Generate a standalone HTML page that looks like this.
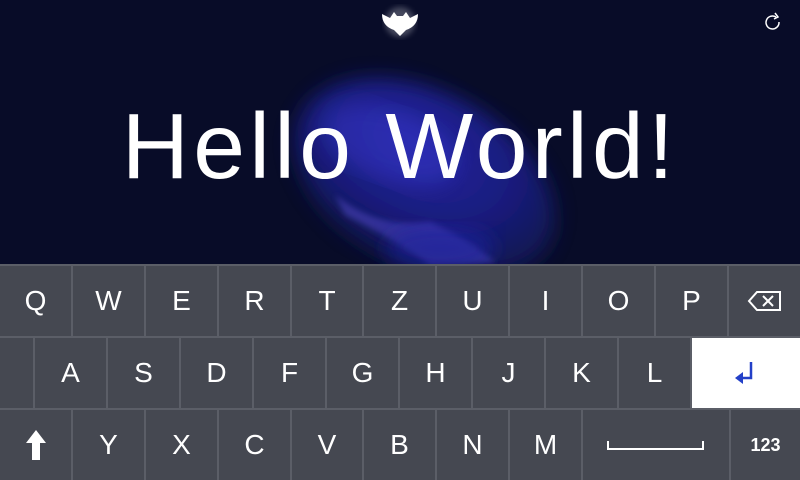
<!DOCTYPE html>
<html><head><meta charset="utf-8"><style>
html,body{margin:0;padding:0;width:800px;height:480px;overflow:hidden;background:#080c28;font-family:"Liberation Sans",sans-serif}
#bg{position:absolute;left:0;top:0}
h1{position:absolute;left:0;width:800px;top:96px;margin:0;text-align:center;color:#fff;font-weight:normal;font-size:93px;letter-spacing:4.3px;line-height:100px}
.kb{position:absolute;left:0;top:264px;width:800px;height:216px;background:#5b5e67}
.k{position:absolute;background:#454851;color:#fff;font-size:28px;display:flex;align-items:center;justify-content:center;height:70px}
</style></head><body>
<svg id="bg" width="800" height="480">
<defs>
<filter id="b"><feGaussianBlur stdDeviation="10"/></filter>
<filter id="b2"><feGaussianBlur stdDeviation="3"/></filter>
<radialGradient id="g" cx="0.4" cy="0.35" r="0.65"><stop offset="0" stop-color="#2a2ab8"/><stop offset="0.6" stop-color="#1c1f8c"/><stop offset="1" stop-color="#101850"/></radialGradient>
</defs>
<rect width="800" height="480" fill="#080c28"/>
<ellipse cx="425" cy="180" rx="140" ry="88" transform="rotate(28 425 180)" fill="url(#g)" filter="url(#b)" opacity="0.85"/>
<ellipse cx="390" cy="145" rx="70" ry="35" transform="rotate(20 390 145)" fill="#3a3ad0" filter="url(#b)" opacity="0.4"/>
<path d="M335 195 Q380 230 430 222 Q470 240 495 262 L430 265 Q400 242 345 215Z" fill="#5a4ed0" filter="url(#b2)" opacity="0.45"/>
<ellipse cx="440" cy="248" rx="55" ry="22" fill="#1f22a0" filter="url(#b)" opacity="0.6"/>
<circle cx="400" cy="22" r="15" fill="#fff" filter="url(#b2)" opacity="0.25"/>
<path d="M382 14 L390 18 L394 12 L397 16 L403 16 L406 12 L410 18 L418 14 Q418 26 406 30 L400 36 L394 30 Q382 26 382 14Z" fill="#fff"/>
<g fill="none" stroke="#fff" stroke-width="1.5"><path d="M779 22 A6.5 6.5 0 1 1 776 17"/><path d="M775 13 L778 17 L774 19"/></g>
</svg>
<h1>Hello World!</h1>
<div class="kb">
<div class="k" style="left:0;top:2px;width:71px">Q</div>
<div class="k" style="left:73px;top:2px;width:71px">W</div>
<div class="k" style="left:146px;top:2px;width:71px">E</div>
<div class="k" style="left:219px;top:2px;width:71px">R</div>
<div class="k" style="left:292px;top:2px;width:70px">T</div>
<div class="k" style="left:364px;top:2px;width:71px">Z</div>
<div class="k" style="left:437px;top:2px;width:71px">U</div>
<div class="k" style="left:510px;top:2px;width:71px">I</div>
<div class="k" style="left:583px;top:2px;width:71px">O</div>
<div class="k" style="left:656px;top:2px;width:71px">P</div>
<div class="k" style="left:729px;top:2px;width:71px"><svg width="36" height="24"><path d="M2 12 L10 3 L33 3 L33 21 L10 21Z" fill="none" stroke="#fff" stroke-width="2"/><path d="M16 7 L26 17 M26 7 L16 17" stroke="#fff" stroke-width="2"/></svg></div>
<div class="k" style="left:0;top:74px;width:33px"></div>
<div class="k" style="left:35px;top:74px;width:71px">A</div>
<div class="k" style="left:108px;top:74px;width:71px">S</div>
<div class="k" style="left:181px;top:74px;width:71px">D</div>
<div class="k" style="left:254px;top:74px;width:71px">F</div>
<div class="k" style="left:327px;top:74px;width:71px">G</div>
<div class="k" style="left:400px;top:74px;width:71px">H</div>
<div class="k" style="left:473px;top:74px;width:71px">J</div>
<div class="k" style="left:546px;top:74px;width:71px">K</div>
<div class="k" style="left:619px;top:74px;width:71px">L</div>
<div class="k" style="left:692px;top:74px;width:108px;background:#fff"><svg width="24" height="26"><path d="M17 2 L17 18 L8 18" fill="none" stroke="#2340c8" stroke-width="2.5"/><path d="M1 18 L9 12 L9 24Z" fill="#2340c8"/></svg></div>
<div class="k" style="left:0;top:146px;width:71px"><svg width="22" height="32"><path d="M11 1 L21 14 L15 14 L15 31 L7 31 L7 14 L1 14Z" fill="#fff"/></svg></div>
<div class="k" style="left:73px;top:146px;width:71px">Y</div>
<div class="k" style="left:146px;top:146px;width:71px">X</div>
<div class="k" style="left:219px;top:146px;width:71px">C</div>
<div class="k" style="left:292px;top:146px;width:70px">V</div>
<div class="k" style="left:364px;top:146px;width:71px">B</div>
<div class="k" style="left:437px;top:146px;width:71px">N</div>
<div class="k" style="left:510px;top:146px;width:71px">M</div>
<div class="k" style="left:583px;top:146px;width:146px"><svg width="100" height="12"><path d="M2 2 L2 10 L97 10 L97 2" fill="none" stroke="#fff" stroke-width="2"/></svg></div>
<div class="k" style="left:731px;top:146px;width:69px;font-size:18px;font-weight:bold">123</div>
</div>
</body></html>
